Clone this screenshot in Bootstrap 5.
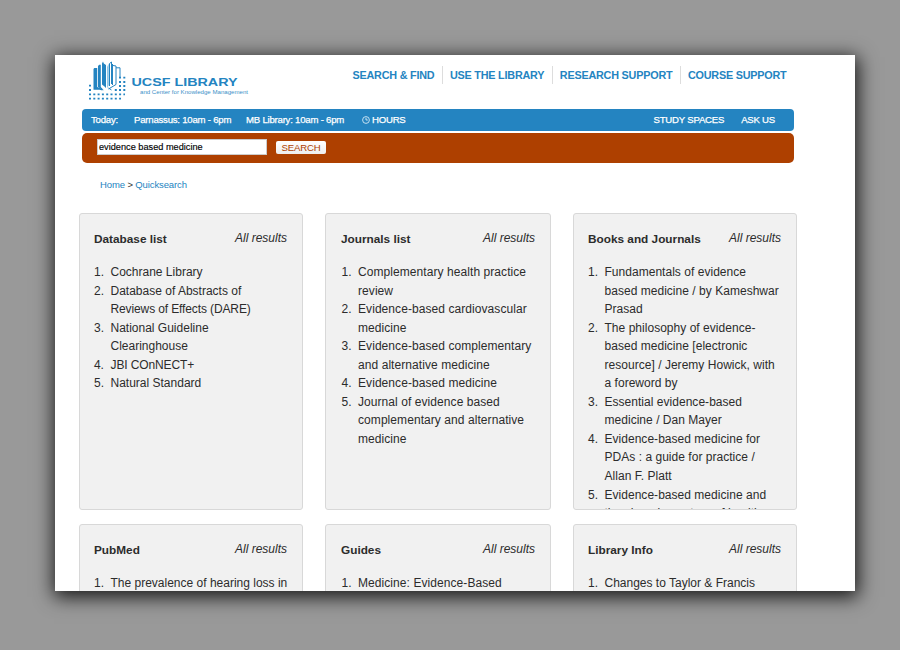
<!DOCTYPE html>
<html lang="en">
<head>
<meta charset="utf-8">
<meta name="viewport" content="width=device-width, initial-scale=1">
<title>UCSF Library - Quicksearch</title>
<link href="https://cdn.jsdelivr.net/npm/bootstrap@5.3.0/dist/css/bootstrap.min.css" rel="stylesheet">
<style>
:root { --ucsf-blue: #2484c1; --ucsf-rust: #ae4000; }
body { width: 900px; height: 650px; padding: 55px 45px 59px 55px; background: #999; overflow: hidden; font-family: "Liberation Sans", Arial, sans-serif; color: #2c2c2c; }
a { color: inherit; text-decoration: none; }
.sheet { width: 800px; height: 536px; box-shadow: 1px 4px 18px 2px rgba(0,0,0,.85); }
.masthead { height: 54px; padding: 0 61px 0 32px; }
.brand-logo { width: 170px; height: 50px; }
.main-links { margin-top: 11px; font-size: 10.8px; letter-spacing: -.2px; font-weight: 700; line-height: 18px; color: var(--ucsf-blue); }
.main-links a { padding: 0 7.5px 0 7px; white-space: nowrap; }
.main-links a + a { border-left: 1px solid #ddd; }
.bars { width: 712px; margin-left: 27px; }
.hours-bar { height: 22px; padding: 0 19px 0 9px; border-radius: 4px; background: var(--ucsf-blue); color: #fff; font-size: 9.6px; letter-spacing: -.22px; -webkit-text-stroke: .25px #fff; white-space: nowrap; }
.query-bar { height: 30px; margin-top: 2px; padding: 6px 15px 8px; border-radius: 5px; background: var(--ucsf-rust); }
.query-bar input { width: 170px; height: 16px; padding: 0 1px; border: 1px solid #ccc; border-radius: 0; font-size: 9.2px; color: #000; background: #fff; line-height: 14px; min-height: 0; -webkit-text-stroke: .15px #000; }
.query-bar button { width: 50px; height: 13px; margin-left: 9px; padding: 0; border: 0; border-radius: 2px; font-size: 9.6px; letter-spacing: -.15px; line-height: 13px; color: var(--ucsf-rust); background: linear-gradient(#fff, #eee); }
.crumbs { height: 50px; padding: 14px 0 0 45px; font-size: 9.5px; letter-spacing: -.12px; line-height: 16px; }
.crumbs a { color: var(--ucsf-blue); }
.results { display: grid; grid-template-columns: 224px 226px 224px; grid-auto-rows: 297px; gap: 14px 22px; margin-left: 24px; }
.panel { padding: 15px 15px 0 14px; border: 1px solid #d8d8d8; border-radius: 3px; background: #f1f1f1; overflow: hidden; font-size: 12px; line-height: 18.55px; }
.panel h2 { margin: 0; font-size: 11.8px; font-weight: 700; line-height: 20px; }
.panel header { height: 34px; line-height: 18px; }
.panel ol { margin: 0; padding-left: 16.5px; white-space: nowrap; list-style: none; counter-reset: hit; }
.panel li { counter-increment: hit; }
.panel li::before { content: counter(hit) "."; display: inline-block; width: 16.5px; margin-left: -16.5px; }
.panel-mid { padding-left: 15px; }
.panel-mid ol { padding-left: 17px; letter-spacing: .07px; }
.panel-books ol { letter-spacing: .03px; }
.tight { letter-spacing: -.12px; }
</style>
<script src="https://cdn.jsdelivr.net/npm/bootstrap@5.3.0/dist/js/bootstrap.bundle.min.js"></script>
</head>
<body>
<div class="sheet bg-white overflow-hidden">
  <header class="masthead d-flex justify-content-between align-items-start">
    <svg class="brand-logo" viewBox="0 0 170 50" role="img" aria-label="UCSF Library">
      <g fill="#2484c1">
        <path d="M6.500 14l.8-1h2.900v19l5.300 2v1.500l-3-.8H6.500z"/>
        <path d="M11 11l1.200-1.200h1.600V32l3.200 3.500-3-1.500-3-2z"/>
        <path d="M15 8.500l1-2 .8 2 2.200 1.500v23l-1.500-1.500-2.500-2z"/>
        <path d="M20 12l1.800-3.500V30L20 33.500z" fill="#91c7e7"/>
      </g>
      <g fill="none" stroke="#2484c1" stroke-width="1">
        <path d="M22.500 31V8.500l2-1.500v22M25.500 9v21M26 10.500l3 .5v18.500l-7.500 4.500M21.500 33l3 2"/>
        <path d="M29 12.800h4v9.700"/>
      </g>
      <g fill="none" stroke="#2484c1" stroke-width="1.800">
        <path d="M2 39.300h36M2 43.700h32" stroke-dasharray="2 2.300"/>
        <path d="M2 30.700h2M2 35h2M27.800 35h2M32 22.700h2m2.300 0h2M32 27h2m2.300 0h2M32 31h2m2.300 0h2M32 35h2m2.300 0h2"/>
      </g>
      <text x="44.500" y="30.500" textLength="106" lengthAdjust="spacingAndGlyphs" font-size="11.300" font-weight="700" fill="#2484c1">UCSF LIBRARY</text>
      <text x="53" y="39" textLength="108" lengthAdjust="spacingAndGlyphs" font-size="6" fill="#3c91c8">and Center for Knowledge Management</text>
    </svg>
    <nav class="main-links d-flex">
      <a href="#">SEARCH &amp; FIND</a><a href="#">USE THE LIBRARY</a><a href="#">RESEARCH SUPPORT</a><a href="#">COURSE SUPPORT</a>
    </nav>
  </header>
  <div class="bars">
    <div class="hours-bar d-flex align-items-center">
      <span style="width:43px">Today:</span>
      <span style="width:112px">Parnassus: 10am - 6pm</span>
      <span style="width:116px">MB Library: 10am - 6pm</span>
      <a href="#" class="d-flex align-items-center"><svg width="8" height="8" viewBox="0 0 8 8" fill="none" stroke="#d5e9f5" stroke-width=".9"><circle cx="4" cy="4" r="3.400"/><path d="M4 1.800V4h1.800"/></svg><span style="margin-left:2px">HOURS</span></a>
      <a href="#" class="ms-auto">STUDY SPACES</a>
      <a href="#" style="margin-left:17px">ASK US</a>
    </div>
    <form class="query-bar d-flex align-items-center">
      <input class="form-control flex-shrink-0" type="text" value="evidence based medicine" aria-label="Search">
      <button type="button">SEARCH</button>
    </form>
  </div>
  <nav class="crumbs"><a href="#">Home</a> &gt; <a href="#">Quicksearch</a></nav>
  <main class="results">
    <section class="panel">
      <header class="d-flex justify-content-between"><h2>Database list</h2><a href="#" class="fst-italic">All results</a></header>
      <ol>
        <li>Cochrane Library</li>
        <li>Database of Abstracts of<br><span class="tight">Reviews of Effects (DARE)</span></li>
        <li>National Guideline<br>Clearinghouse</li>
        <li class="tight">JBI COnNECT+</li>
        <li>Natural Standard</li>
      </ol>
    </section>
    <section class="panel panel-mid">
      <header class="d-flex justify-content-between"><h2>Journals list</h2><a href="#" class="fst-italic">All results</a></header>
      <ol>
        <li>Complementary health practice<br>review</li>
        <li>Evidence-based cardiovascular<br>medicine</li>
        <li>Evidence-based complementary<br>and alternative medicine</li>
        <li>Evidence-based medicine</li>
        <li>Journal of evidence based<br>complementary and alternative<br>medicine</li>
      </ol>
    </section>
    <section class="panel panel-books">
      <header class="d-flex justify-content-between"><h2>Books and Journals</h2><a href="#" class="fst-italic">All results</a></header>
      <ol>
        <li>Fundamentals of evidence<br>based medicine / by Kameshwar<br>Prasad</li>
        <li>The philosophy of evidence-<br>based medicine [electronic<br>resource] / Jeremy Howick, with<br>a foreword by</li>
        <li>Essential evidence-based<br>medicine / Dan Mayer</li>
        <li>Evidence-based medicine for<br>PDAs : a guide for practice /<br>Allan F. Platt</li>
        <li>Evidence-based medicine and<br>the changing nature of health</li>
      </ol>
    </section>
    <section class="panel">
      <header class="d-flex justify-content-between"><h2>PubMed</h2><a href="#" class="fst-italic">All results</a></header>
      <ol><li>The prevalence of hearing loss in</li></ol>
    </section>
    <section class="panel panel-mid">
      <header class="d-flex justify-content-between"><h2>Guides</h2><a href="#" class="fst-italic">All results</a></header>
      <ol><li>Medicine: Evidence-Based</li></ol>
    </section>
    <section class="panel">
      <header class="d-flex justify-content-between"><h2>Library Info</h2><a href="#" class="fst-italic">All results</a></header>
      <ol><li>Changes to Taylor &amp; Francis</li></ol>
    </section>
  </main>
</div>
</body>
</html>
